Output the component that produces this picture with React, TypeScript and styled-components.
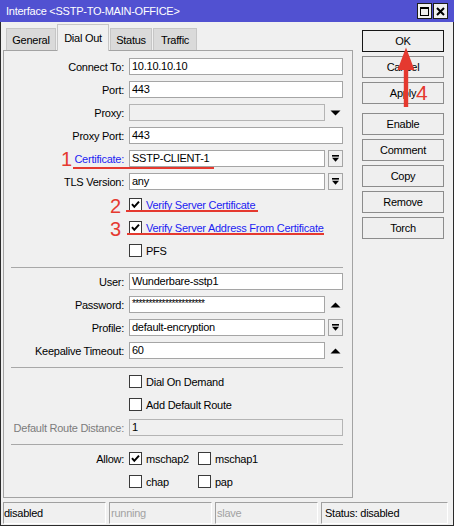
import React from "react";
import styled, { createGlobalStyle } from "styled-components";

const GlobalStyle = createGlobalStyle`
  html, body { margin: 0; padding: 0; background: #f0f0f0; }
  body { font-family: "Liberation Sans", Arial, sans-serif; font-size: 11px; }
  * { box-sizing: border-box; }
`;

const RED = "#e5392f";

const Window = styled.div`
  position: relative;
  width: 454px;
  height: 526px;
  border: 1px solid #2b2b2b;
  border-top: 0;
  background: #f0f0f0;
  display: flex;
  flex-direction: column;
  color: #000;
  letter-spacing: -0.25px;
`;

const TitleBar = styled.div`
  height: 22px;
  margin: 0 -1px;
  background: #5151d1;
  color: #fff;
  display: flex;
  align-items: center;
  justify-content: space-between;
  padding: 0 6px;
  font-size: 11px;
`;

const TitleButtons = styled.div`
  display: flex;
  gap: 1px;
`;

const TitleButton = styled.div`
  width: 15px;
  height: 16px;
  border: 1px solid #1c1c1c;
  background: #f0f0f0;
  display: flex;
  align-items: center;
  justify-content: center;
`;

const Main = styled.div`
  flex: 1;
  display: flex;
  padding-left: 2px;
`;

const LeftCol = styled.div`
  width: 350px;
  display: flex;
  flex-direction: column;
`;

const TabStrip = styled.div`
  height: 28px;
  display: flex;
  align-items: flex-end;
  padding-left: 3px;
`;

const Tab = styled.div<{ $active?: boolean; $w: number }>`
  position: relative;
  z-index: ${(p) => (p.$active ? 2 : 1)};
  width: ${(p) => p.$w}px;
  height: ${(p) => (p.$active ? 27 : 22)}px;
  margin-right: 1px;
  margin-bottom: ${(p) => (p.$active ? -1 : 0)}px;
  border: 1px solid #c6c6c6;
  border-bottom: 0;
  background: ${(p) => (p.$active ? "#f0f0f0" : "#dadada")};
  display: flex;
  align-items: center;
  justify-content: center;
  white-space: nowrap;
`;

const Panel = styled.div`
  flex: 1;
  border: 1px solid #a3a3a3;
  padding-top: 4px;
`;

const Row = styled.div`
  display: flex;
  align-items: center;
  height: 23px;
`;

const Label = styled.div<{ $tone?: "link" | "muted" }>`
  width: 120px;
  margin-right: 5px;
  text-align: right;
  white-space: nowrap;
  color: ${(p) =>
    p.$tone === "link" ? "#1d1df2" : p.$tone === "muted" ? "#7c7c7c" : "#000"};
`;

const FieldBox = styled.div`
  width: 214px;
  display: flex;
  align-items: center;
`;

const Field = styled.div<{ $disabled?: boolean }>`
  flex: 1;
  height: 17px;
  border: 1px solid ${(p) => (p.$disabled ? "#b4b4b4" : "#a5a5a5")};
  background: ${(p) => (p.$disabled ? "#f0f0f0" : "#fff")};
  padding-left: 2px;
  line-height: 15px;
  white-space: nowrap;
  overflow: hidden;
`;

const Secret = styled.span`
  font-size: 10px;
  letter-spacing: -0.6px;
  position: relative;
  top: -1px;
`;

const DropButton = styled.div`
  width: 15px;
  height: 17px;
  margin-left: 3px;
  border: 1px solid #a5a5a5;
  background: #f0f0f0;
  display: flex;
  align-items: center;
  justify-content: center;
`;

const GlyphSlot = styled.div`
  width: 15px;
  height: 17px;
  margin-left: 3px;
  display: flex;
  align-items: center;
  justify-content: center;
`;

const CheckGroup = styled.div<{ $w?: number }>`
  display: flex;
  align-items: center;
  width: ${(p) => (p.$w ? `${p.$w}px` : "auto")};
`;

const Box = styled.span`
  width: 13px;
  height: 13px;
  flex: none;
  border: 1px solid #3a3a3a;
  background: #fff;
  display: inline-flex;
  align-items: center;
  justify-content: center;
`;

const CheckText = styled.span<{ $link?: boolean }>`
  margin-left: 4px;
  white-space: nowrap;
  color: ${(p) => (p.$link ? "#1d1df2" : "#000")};
`;

const Separator = styled.div`
  height: 1px;
  background: #a8a8a8;
  margin: 5px 9px 2px 7px;
`;

const ButtonCol = styled.div`
  width: 82px;
  margin-left: 9px;
  padding-top: 8px;
  display: flex;
  flex-direction: column;
`;

const Button = styled.div<{ $primary?: boolean; $after?: number }>`
  height: 22px;
  margin-bottom: ${(p) => p.$after ?? 4}px;
  border: 1px solid ${(p) => (p.$primary ? "#161616" : "#8c8c8c")};
  background: #efefef;
  display: flex;
  align-items: center;
  justify-content: center;
`;

const StatusBar = styled.div`
  height: 27px;
  display: flex;
  gap: 3px;
  padding: 4px 0 1px 2px;
`;

const StatusCell = styled.div<{ $w: number; $muted?: boolean; $pad?: number }>`
  width: ${(p) => p.$w}px;
  height: 22px;
  border-top: 1px solid #a0a0a0;
  border-left: 1px solid #a0a0a0;
  border-right: 1px solid #fff;
  border-bottom: 1px solid #fff;
  padding-left: ${(p) => p.$pad ?? 0}px;
  line-height: 20px;
  white-space: nowrap;
  color: ${(p) => (p.$muted ? "#a2a2a2" : "#000")};
`;

const Marker = styled.span<{ $x: number; $y: number; $size: number }>`
  position: absolute;
  left: ${(p) => p.$x}px;
  top: ${(p) => p.$y}px;
  font-size: ${(p) => p.$size}px;
  line-height: 1;
  letter-spacing: 0;
  color: ${RED};
`;

const Underline = styled.div<{ $x: number; $y: number; $w: number }>`
  position: absolute;
  left: ${(p) => p.$x}px;
  top: ${(p) => p.$y}px;
  width: ${(p) => p.$w}px;
  height: 2px;
  background: ${RED};
`;

const ArrowSvg = styled.svg`
  position: absolute;
  left: 395px;
  top: 46px;
`;

const DropIcon = () => (
  <svg width="9" height="9" viewBox="0 0 9 9">
    <rect x="1" y="1" width="7" height="1.6" fill="#000" />
    <polygon points="1,3.8 8,3.8 4.5,7.8" fill="#000" />
  </svg>
);

const Triangle = ({ up }: { up?: boolean }) => (
  <svg width="11" height="6" viewBox="0 0 11 6">
    <polygon points={up ? "0.5,5.5 10.5,5.5 5.5,0.5" : "0.5,0.5 10.5,0.5 5.5,5.5"} fill="#000" />
  </svg>
);

const Tick = () => (
  <svg width="11" height="11" viewBox="0 0 11 11">
    <path d="M2 5.2 L4.3 7.8 L9 2.6" fill="none" stroke="#000" strokeWidth="2" />
  </svg>
);

const Check = ({ on, text, link, w }: { on?: boolean; text: string; link?: boolean; w?: number }) => (
  <CheckGroup $w={w}>
    <Box>{on && <Tick />}</Box>
    <CheckText $link={link}>{text}</CheckText>
  </CheckGroup>
);

type FieldRowProps = {
  label: string;
  value?: React.ReactNode;
  tone?: "link" | "muted";
  disabled?: boolean;
  tail?: "drop" | "down" | "up";
};

const FieldRow = ({ label, value, tone, disabled, tail }: FieldRowProps) => (
  <Row>
    <Label $tone={tone}>{label}</Label>
    <FieldBox>
      <Field $disabled={disabled}>{value}</Field>
      {tail === "drop" && (
        <DropButton>
          <DropIcon />
        </DropButton>
      )}
      {tail === "down" && (
        <GlyphSlot>
          <Triangle />
        </GlyphSlot>
      )}
      {tail === "up" && (
        <GlyphSlot>
          <Triangle up />
        </GlyphSlot>
      )}
    </FieldBox>
  </Row>
);

const CheckRow = ({ children, label }: { children: React.ReactNode; label?: string }) => (
  <Row>
    <Label>{label}</Label>
    {children}
  </Row>
);

const tabs = [
  { name: "General", w: 50 },
  { name: "Dial Out", w: 52, active: true },
  { name: "Status", w: 42 },
  { name: "Traffic", w: 44 },
];

const buttons = ["OK", "Cancel", "Apply", "Enable", "Comment", "Copy", "Remove", "Torch"];

export default function App() {
  return (
    <>
      <GlobalStyle />
      <Window>
        <TitleBar>
          <span>Interface &lt;SSTP-TO-MAIN-OFFICE&gt;</span>
          <TitleButtons>
            <TitleButton>
              <svg width="9" height="9" viewBox="0 0 9 9">
                <rect x="0.5" y="0.5" width="8" height="8" fill="none" stroke="#000" />
                <rect x="0" y="0" width="9" height="2" fill="#000" />
              </svg>
            </TitleButton>
            <TitleButton>
              <svg width="9" height="9" viewBox="0 0 9 9">
                <path d="M1 1 L8 8 M8 1 L1 8" stroke="#000" strokeWidth="2" />
              </svg>
            </TitleButton>
          </TitleButtons>
        </TitleBar>

        <Main>
          <LeftCol>
            <TabStrip>
              {tabs.map((t) => (
                <Tab key={t.name} $w={t.w} $active={t.active}>
                  {t.name}
                </Tab>
              ))}
            </TabStrip>
            <Panel>
              <FieldRow label="Connect To:" value="10.10.10.10" />
              <FieldRow label="Port:" value="443" />
              <FieldRow label="Proxy:" disabled tail="down" />
              <FieldRow label="Proxy Port:" value="443" />
              <FieldRow label="Certificate:" tone="link" value="SSTP-CLIENT-1" tail="drop" />
              <FieldRow label="TLS Version:" value="any" tail="drop" />
              <CheckRow>
                <Check on link text="Verify Server Certificate" />
              </CheckRow>
              <CheckRow>
                <Check on link text="Verify Server Address From Certificate" />
              </CheckRow>
              <CheckRow>
                <Check text="PFS" />
              </CheckRow>
              <Separator />
              <FieldRow label="User:" value="Wunderbare-sstp1" />
              <FieldRow
                label="Password:"
                value={<Secret>**********************</Secret>}
                tail="up"
              />
              <FieldRow label="Profile:" value="default-encryption" tail="drop" />
              <FieldRow label="Keepalive Timeout:" value="60" tail="up" />
              <Separator />
              <CheckRow>
                <Check text="Dial On Demand" />
              </CheckRow>
              <CheckRow>
                <Check text="Add Default Route" />
              </CheckRow>
              <FieldRow label="Default Route Distance:" tone="muted" value="1" disabled />
              <Separator />
              <CheckRow label="Allow:">
                <Check on text="mschap2" w={69} />
                <Check text="mschap1" />
              </CheckRow>
              <CheckRow>
                <Check text="chap" w={69} />
                <Check text="pap" />
              </CheckRow>
            </Panel>
          </LeftCol>

          <ButtonCol>
            {buttons.map((b) => (
              <Button key={b} $primary={b === "OK"} $after={b === "Apply" ? 9 : 4}>
                {b}
              </Button>
            ))}
          </ButtonCol>
        </Main>

        <StatusBar>
          <StatusCell $w={103}>disabled</StatusCell>
          <StatusCell $w={103} $muted $pad={1}>
            running
          </StatusCell>
          <StatusCell $w={103} $muted $pad={1}>
            slave
          </StatusCell>
          <StatusCell $w={127} $pad={3}>
            Status: disabled
          </StatusCell>
        </StatusBar>

        <Marker $x={60} $y={149} $size={20}>1</Marker>
        <Marker $x={109} $y={196} $size={20}>2</Marker>
        <Marker $x={109} $y={219} $size={20}>3</Marker>
        <Marker $x={415} $y={82} $size={21}>4</Marker>
        <Underline $x={72} $y={167} $w={141} />
        <Underline $x={125} $y={210} $w={132} />
        <Underline $x={126} $y={233} $w={197} />
        <ArrowSvg width="20" height="63" viewBox="0 0 20 63">
          <polygon points="10,1.5 18.5,24 12.2,24 12.2,61 7.8,61 7.8,24 1.5,24" fill={RED} />
        </ArrowSvg>
      </Window>
    </>
  );
}
